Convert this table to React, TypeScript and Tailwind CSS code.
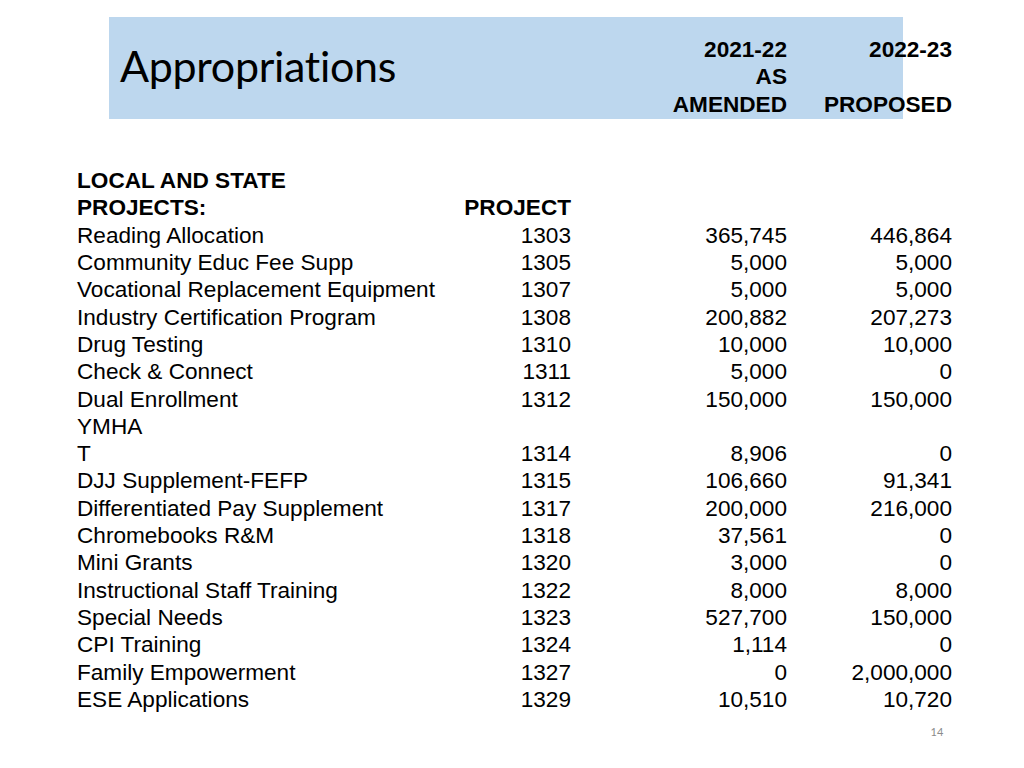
const ROWS: [string, string, string, string][] = [
  ["Reading Allocation", "1303", "365,745", "446,864"],
  ["Community Educ Fee Supp", "1305", "5,000", "5,000"],
  ["Vocational Replacement Equipment", "1307", "5,000", "5,000"],
  ["Industry Certification Program", "1308", "200,882", "207,273"],
  ["Drug Testing", "1310", "10,000", "10,000"],
  ["Check & Connect", "1311", "5,000", "0"],
  ["Dual Enrollment", "1312", "150,000", "150,000"],
  ["YMHA", "", "", ""],
  ["T", "1314", "8,906", "0"],
  ["DJJ Supplement-FEFP", "1315", "106,660", "91,341"],
  ["Differentiated Pay Supplement", "1317", "200,000", "216,000"],
  ["Chromebooks R&M", "1318", "37,561", "0"],
  ["Mini Grants", "1320", "3,000", "0"],
  ["Instructional Staff Training", "1322", "8,000", "8,000"],
  ["Special Needs", "1323", "527,700", "150,000"],
  ["CPI Training", "1324", "1,114", "0"],
  ["Family Empowerment", "1327", "0", "2,000,000"],
  ["ESE Applications", "1329", "10,510", "10,720"],
];

export default function App() {
  return (
    <div className="w-[1024px] h-[768px] bg-white text-black font-['Liberation_Sans',Arial,sans-serif] overflow-hidden">
      {/* title band */}
      <div className="mt-[17px] ml-[109px] w-[794px] h-[102px] bg-[#bdd7ee]">
        <div className="w-[843px] grid grid-cols-[1fr_216px_165px] text-[22.6px] leading-[27.3px] font-bold">
          <div className="pl-[11px] pt-[25px] font-['Lato',sans-serif] font-normal text-[43px] leading-[48px] tracking-[-0.3px]">
            Appropriations
          </div>
          <div className="pt-[19px] text-right">
            <div>2021-22</div>
            <div>AS</div>
            <div>AMENDED</div>
          </div>
          <div className="pt-[19px] text-right">
            <div>2022-23</div>
            <div>&nbsp;</div>
            <div>PROPOSED</div>
          </div>
        </div>
      </div>

      {/* table */}
      <div className="mt-[48px] ml-[77px] w-[875px] grid grid-cols-[384px_110px_216px_165px] text-[22.6px] leading-[27.32px]">
        <div className="font-bold col-span-4">LOCAL AND STATE</div>
        <div className="font-bold">PROJECTS:</div>
        <div className="font-bold text-right">PROJECT</div>
        <div></div>
        <div></div>
        {ROWS.map((r) => (
          <div key={r[0]} className="contents">
            <div className="whitespace-nowrap">{r[0] || "\u00a0"}</div>
            <div className="text-right">{r[1]}</div>
            <div className="text-right">{r[2]}</div>
            <div className="text-right">{r[3]}</div>
          </div>
        ))}
      </div>

      <div className="mt-[12px] ml-[929px] w-[16px] text-center text-[11px] leading-[14px] text-[#8b8b8b] font-['Lato',sans-serif]">
        14
      </div>
    </div>
  );
}
